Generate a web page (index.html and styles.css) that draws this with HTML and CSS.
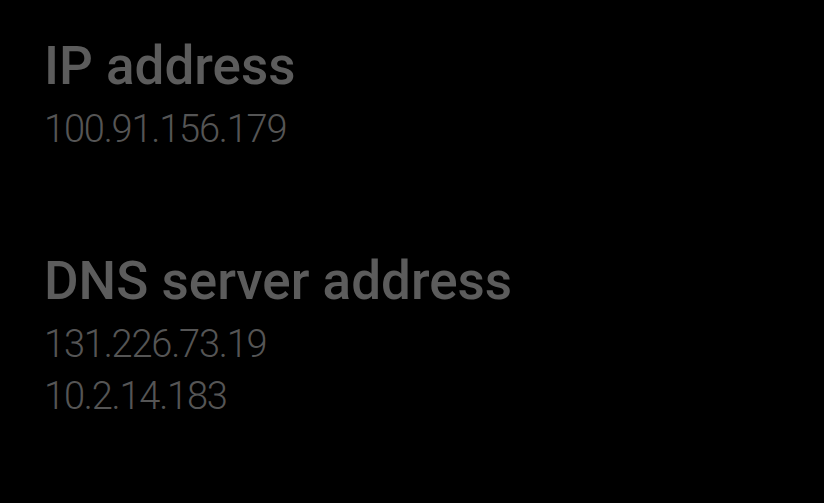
FILE: index.html
```html
<!DOCTYPE html>
<html>
<head>
<meta charset="utf-8">
<link rel="stylesheet" href="styles.css">
</head>
<body>
<main class="list">
  <section class="item">
    <h2 class="title">IP address</h2>
    <div class="value">100.91.156.179</div>
  </section>
  <section class="item">
    <h2 class="title">DNS server address</h2>
    <div class="value">131.226.73.19</div>
    <div class="value">10.2.14.183</div>
  </section>
</main>
</body>
</html>
```
FILE: styles.css
```css
html, body {
  margin: 0;
  background: #000;
  height: 100%;
}
body {
  font-family: Roboto, "Noto Sans", sans-serif;
  color: #5a5a5a;
}
.list {
  padding: 35px 0 0 44px;
  display: flex;
  flex-direction: column;
  gap: 95px;
}
.title {
  margin: 0 0 6px;
  font-size: 53px;
  font-weight: 500;
  line-height: 62px;
  color: #5c5c5c;
}
.value {
  font-size: 38px;
  font-weight: 300;
  line-height: 52px;
  letter-spacing: -1.2px;
  color: #555;
}
```
